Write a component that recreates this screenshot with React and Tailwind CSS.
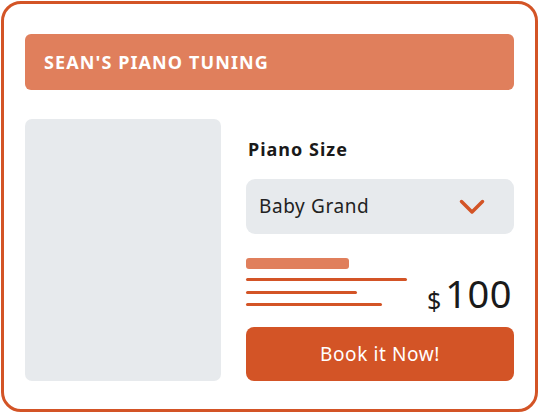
import React from 'react'

function Chevron() {
  return (
    <svg width="26" height="16" viewBox="0 0 26 16" fill="none">
      <path d="M2.5 2.5 L13 13 L23.5 2.5" stroke="#d35426" strokeWidth="3.5" strokeLinecap="round" strokeLinejoin="round" />
    </svg>
  )
}

export default function App() {
  return (
    <div className="w-[540px] h-[414px] bg-white p-px" style={{ fontFamily: '"Noto Sans", "Open Sans", sans-serif' }}>
      <div className="h-[411px] w-[537px] rounded-[20px] border-[3px] border-[#d35426] px-[21px] pt-[30px]">
        <div className="h-[56px] rounded-[6px] bg-[#e07f5c] flex items-center pl-[19px]">
          <span className="text-white font-bold text-[18px] tracking-[1.1px]">SEAN'S PIANO TUNING</span>
        </div>
        <div className="flex mt-[29px] gap-[25px]">
          <div className="w-[196px] h-[262px] rounded-[7px] bg-[#e7eaed]" />
          <div className="flex-1 flex flex-col">
            <div className="pl-[2px] pt-[19px] text-[18px] font-bold text-[#1a1a1a] leading-[22px] tracking-[1px]">Piano Size</div>
            <div className="mt-[19px] h-[55px] rounded-[9px] bg-[#e7eaed] flex items-center justify-between pl-[13px] pr-[29px]">
              <span className="text-[19px] text-[#222] leading-none tracking-[0.6px]">Baby Grand</span>
              <Chevron />
            </div>
            <div className="flex items-end justify-between mt-[24px]">
              <div className="flex flex-col">
                <div className="w-[103px] h-[11px] rounded-[3px] bg-[#e07f5c]" />
                <div className="w-[161px] h-[3px] rounded-full bg-[#d35426] mt-[9px]" />
                <div className="w-[111px] h-[3px] rounded-full bg-[#d35426] mt-[10px]" />
                <div className="w-[136px] h-[3px] rounded-full bg-[#d35426] mt-[9px]" />
              </div>
              <div className="flex items-baseline text-[#1a1a1a] pr-[2px] mb-[-6px]">
                <span className="text-[25px] leading-none mr-[4px] translate-y-[2px]">$</span>
                <span className="text-[38px] leading-none tracking-[0.5px]">100</span>
              </div>
            </div>
            <button className="mt-[21px] h-[54px] rounded-[8px] bg-[#d35426] text-white text-[19px] tracking-[0.6px] flex items-center justify-center">
              Book it Now!
            </button>
          </div>
        </div>
      </div>
    </div>
  )
}
